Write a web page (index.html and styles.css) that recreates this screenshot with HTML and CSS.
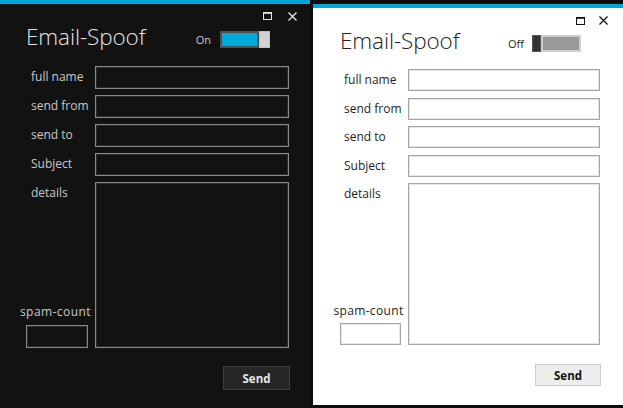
FILE: index.html
```html
<!DOCTYPE html>
<html lang="en">
<head>
<meta charset="utf-8">
<title>Email-Spoof</title>
<link rel="stylesheet" href="styles.css">
</head>
<body>
<div class="desktop">
  <section class="window dark">
    <div class="accent"></div>
    <div class="titlebar">
      <svg class="ctl-max" width="9" height="8" viewBox="0 0 9 8"><rect x="0.5" y="1" width="8" height="6.5" fill="none" stroke="currentColor" stroke-width="1"/><rect x="0" y="0" width="9" height="1.6" fill="currentColor"/></svg>
      <svg class="ctl-close" width="9" height="9" viewBox="0 0 9 9"><path d="M0.5 0.5L8.5 8.5M8.5 0.5L0.5 8.5" stroke="currentColor" stroke-width="1.3" fill="none"/></svg>
    </div>
    <header class="head">
      <h1 class="title">Email-Spoof</h1>
      <div class="switch on">
        <span class="switch-label">On</span>
        <span class="track"></span><span class="thumb"></span>
      </div>
    </header>
    <form class="form">
      <label class="lbl">full name</label><input class="field" type="text">
      <label class="lbl">send from</label><input class="field" type="text">
      <label class="lbl">send to</label><input class="field" type="text">
      <label class="lbl">Subject</label><input class="field" type="text">
      <div class="side">
        <label class="lbl">details</label>
        <div class="spam">
          <span class="spam-label">spam-count</span>
          <input class="field spam-field" type="text">
        </div>
      </div>
      <textarea class="field details"></textarea>
    </form>
    <div class="foot"><button class="send" type="button">Send</button></div>
  </section>

  <section class="window light">
    <div class="accent"></div>
    <div class="titlebar">
      <svg class="ctl-max" width="9" height="8" viewBox="0 0 9 8"><rect x="0.5" y="1" width="8" height="6.5" fill="none" stroke="currentColor" stroke-width="1"/><rect x="0" y="0" width="9" height="1.6" fill="currentColor"/></svg>
      <svg class="ctl-close" width="9" height="9" viewBox="0 0 9 9"><path d="M0.5 0.5L8.5 8.5M8.5 0.5L0.5 8.5" stroke="currentColor" stroke-width="1.3" fill="none"/></svg>
    </div>
    <header class="head">
      <h1 class="title">Email-Spoof</h1>
      <div class="switch off">
        <span class="switch-label">Off</span>
        <span class="thumb"></span><span class="track"></span>
      </div>
    </header>
    <form class="form">
      <label class="lbl">full name</label><input class="field" type="text">
      <label class="lbl">send from</label><input class="field" type="text">
      <label class="lbl">send to</label><input class="field" type="text">
      <label class="lbl">Subject</label><input class="field" type="text">
      <div class="side">
        <label class="lbl">details</label>
        <div class="spam">
          <span class="spam-label">spam-count</span>
          <input class="field spam-field" type="text">
        </div>
      </div>
      <textarea class="field details"></textarea>
    </form>
    <div class="foot"><button class="send" type="button">Send</button></div>
  </section>
</div>
</body>
</html>
```
FILE: styles.css
```css
* { box-sizing: border-box; }
html, body { margin: 0; padding: 0; }
body {
  width: 623px;
  height: 408px;
  overflow: hidden;
  background: #0c0c0c;
  font-family: "Open Sans", "Noto Sans", "Liberation Sans", sans-serif;
}
.desktop {
  display: flex;
  gap: 3px;
  align-items: flex-start;
}
.window {
  width: 310px;
  display: flex;
  flex-direction: column;
  flex: none;
}
.dark {
  height: 408px;
  background: #121212;
  color: #c9c9c9;
  --pad-l: 26px;
  --lab-w: 62px;
  --fld-w: 194px;
  --row-h: 23px;
  --row-gap: 6px;
  --det-h: 166px;
  --fld-border: #8a8a8a;
  --fld-inner: #2a2a2a;
  --fld-bg: #121212;
}
.light {
  margin-top: 4px;
  height: 401px;
  background: #ffffff;
  color: #1e1e1e;
  --pad-l: 27px;
  --lab-w: 61px;
  --fld-w: 192px;
  --row-h: 22px;
  --row-gap: 6.5px;
  --det-h: 162px;
  --fld-border: #a6a6a6;
  --fld-inner: #e6e6e6;
  --fld-bg: #ffffff;
}
.accent {
  height: 4px;
  background: #00a6d6;
}
.titlebar {
  display: flex;
  justify-content: flex-end;
  align-items: flex-start;
  gap: 17px;
  height: 16px;
  padding: 8px 13px 0 0;
}
.dark .titlebar { color: #e6e6e6; }
.light .titlebar { color: #111; padding: 9px 15px 0 0; gap: 15px; }
.dark .ctl-max { margin-right: -1px; }
.light .ctl-max { margin-right: -1px; }
.light .ctl-close { margin-top: -1px; }
.head {
  display: flex;
  justify-content: space-between;
  align-items: flex-start;
  margin-top: 2px;
  padding: 0 40px 0 var(--pad-l);
  height: 30px;
}
.light .head { padding-right: 42px; }
.title {
  margin: 0;
  font-weight: 300;
  font-size: 22.5px;
  line-height: 30px;
  letter-spacing: -0.1px;
}
.dark .title { color: #e4e4e4; }
.light .title { color: #222; }
.switch {
  display: flex;
  align-items: center;
  margin-top: 9px;
  height: 17px;
}
.switch-label {
  font-size: 11px;
  margin-right: 9px;
  line-height: 17px;
}
.light .switch-label { margin-right: 8px; }
.track {
  height: 17px;
  display: block;
}
.thumb {
  height: 17px;
  display: block;
}
.on .track {
  width: 39px;
  background: #00aadb;
  border: 2px solid #505050;
}
.on .thumb {
  width: 11px;
  background: #d2d2d2;
  border: 1px solid #bdbdbd;
}
.off .thumb {
  width: 9px;
  background: #333;
  border: 1px solid #555;
}
.off .track {
  width: 40px;
  background: #9a9a9a;
  border: 2px solid #cfcfcf;
}
.form {
  margin: 14px 0 0 0;
  padding-left: var(--pad-l);
  display: grid;
  grid-template-columns: var(--lab-w) var(--fld-w);
  grid-template-rows: repeat(4, var(--row-h)) var(--det-h);
  column-gap: 7px;
  row-gap: var(--row-gap);
}
.light .form { margin-top: 13px; }
.lbl {
  font-size: 12px;
  line-height: 16px;
  padding: 3px 0 0 5px;
  white-space: nowrap;
}
.light .lbl { padding-left: 4px; padding-top: 3px; }
.field {
  display: block;
  width: 100%;
  height: 100%;
  margin: 0;
  border: 1px solid var(--fld-border);
  box-shadow: inset 0 0 0 1px var(--fld-inner);
  background: var(--fld-bg);
  border-radius: 0;
  padding: 0;
  outline: none;
  resize: none;
  font: inherit;
}
.side {
  display: flex;
  flex-direction: column;
  justify-content: space-between;
}
.spam {
  display: flex;
  flex-direction: column;
  align-items: center;
}
.spam-label {
  font-size: 12px;
  line-height: 16px;
  white-space: nowrap;
  letter-spacing: 0.45px;
  margin-bottom: 5px;
  margin-left: -3px;
}
.light .spam-label { margin-bottom: 4px; margin-left: -4px; letter-spacing: 0.35px; }
.spam-field {
  height: var(--row-h);
}
.foot {
  display: flex;
  justify-content: flex-end;
  padding-right: 20px;
  margin-top: 18px;
}
.light .foot { padding-right: 22px; margin-top: 19px; }
.send {
  width: 67px;
  height: 24px;
  font-family: inherit;
  font-weight: 700;
  font-size: 11.5px;
  padding: 0;
  border-radius: 0;
}
.dark .send {
  background: #262626;
  color: #e6e6e6;
  border: 1px solid #3e3e3e;
}
.light .send {
  width: 66px;
  height: 22px;
  background: #ececec;
  color: #111;
  border: 1px solid #cdcdcd;
}
```
